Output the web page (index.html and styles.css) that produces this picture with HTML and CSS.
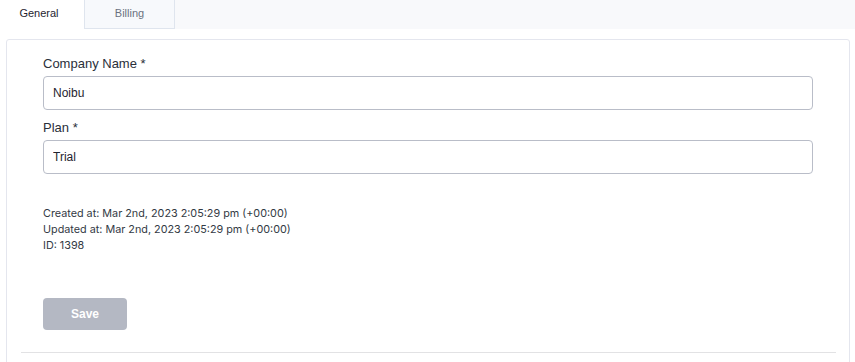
FILE: index.html
```html
<!DOCTYPE html>
<html lang="en">
<head>
  <meta charset="UTF-8" />
  <title>Company Settings</title>
  <link rel="stylesheet" href="styles.css">
</head>
<body>

<div class="tabs">
  <div class="tab active">General</div>
  <div class="tab">Billing</div>
</div>

<div class="card">
  <div class="form">
    <label class="field-label">Company Name *</label>
    <input class="field-input" type="text" value="Noibu">

    <label class="field-label">Plan *</label>
    <input class="field-input" type="text" value="Trial">

    <div class="meta">
      Created at: Mar 2nd, 2023 2:05:29 pm (+00:00)<br/>
      Updated at: Mar 2nd, 2023 2:05:29 pm (+00:00)<br/>
      ID: 1398
    </div>

    <button class="save-button" disabled>Save</button>
  </div>
  <div class="divider"></div>
</div>

</body>
</html>
```

FILE: styles.css
```css
body {
  margin: 0;
  padding: 0;
  background: #fff;
  font-family: "Liberation Sans", Arial, sans-serif;
  color: #222;
}

.tabs {
  display: flex;
  height: 29px;
  background: #f8f9fb;
}

.tab {
  width: 91px;
  box-sizing: border-box;
  text-align: center;
  font-size: 11px;
  line-height: 27px;
  color: #6b7280;
  border: 1px solid #dfe5ee;
  border-top: none;
  background: #f7f9fc;
}

.tab.active {
  width: 84px;
  padding-right: 6px;
  color: #1f2430;
  background: #fff;
  border: none;
}

.card {
  margin: 10px 5px 0 6px;
  border: 1px solid #e4e6ee;
  border-radius: 3px;
  height: 340px;
  box-sizing: border-box;
}

.form {
  padding: 16px 36px 0 36px;
  display: flex;
  flex-direction: column;
  align-items: flex-start;
}

.field-label {
  font-size: 13px;
  line-height: 16px;
  color: #2a2f3a;
  margin-bottom: 4px;
}

.field-input {
  width: 100%;
  height: 34px;
  box-sizing: border-box;
  border: 1px solid #b9bdc8;
  border-radius: 4px;
  padding: 0 9px;
  font-family: "Liberation Sans", Arial, sans-serif;
  font-size: 12px;
  color: #1f2430;
  margin-bottom: 10px;
}

.meta {
  margin-top: 22px;
  font-family: Inter, sans-serif;
  font-size: 10.8px;
  line-height: 16px;
  color: #333a44;
}

.save-button {
  margin-top: 44px;
  width: 84px;
  height: 32px;
  border: none;
  border-radius: 4px;
  background: #b4b8c3;
  color: #fff;
  font-family: "Liberation Sans", Arial, sans-serif;
  font-weight: bold;
  font-size: 12px;
}

.divider {
  margin: 22px 13px 0 14px;
  border-top: 1px solid #e2e2e4;
}
```
